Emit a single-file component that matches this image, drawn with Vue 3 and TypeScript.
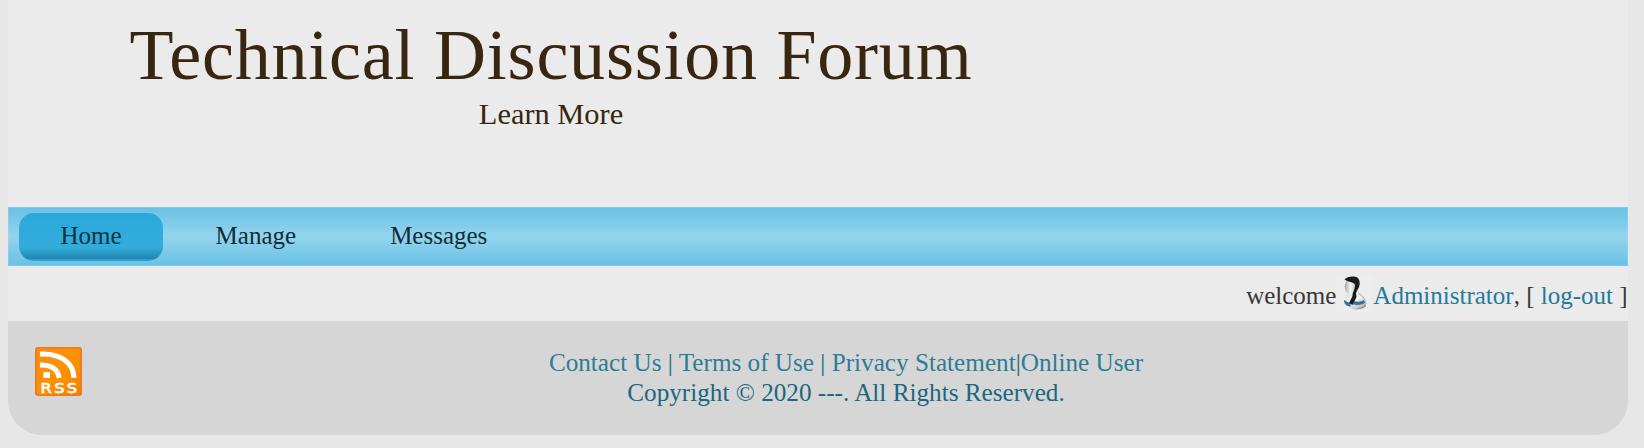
<script setup lang="ts">
interface NavItem {
  label: string
  active: boolean
}

const navItems: NavItem[] = [
  { label: 'Home', active: true },
  { label: 'Manage', active: false },
  { label: 'Messages', active: false },
]
</script>

<template>
  <div class="page">
    <div class="sheet">
      <header class="header">
        <div class="brand">
          <h1 class="title">Technical Discussion Forum</h1>
          <p class="slogan">Learn More</p>
        </div>
      </header>

      <nav class="nav">
        <a
          v-for="item in navItems"
          :key="item.label"
          class="nav-item"
          :class="{ active: item.active }"
        >{{ item.label }}</a>
      </nav>

      <div class="welcome">
        <span>welcome</span>
        <svg class="user-icon" width="36" height="37" viewBox="0 0 36 37">
          <defs>
            <linearGradient id="face" x1="0" x2="1">
              <stop offset="0" stop-color="#a8a8a8" />
              <stop offset=".5" stop-color="#f4f4f4" />
              <stop offset="1" stop-color="#bcbcbc" />
            </linearGradient>
            <linearGradient id="coat" x1="0" x2="1" y2="1">
              <stop offset="0" stop-color="#cfd2d5" />
              <stop offset=".45" stop-color="#fbfbfb" />
              <stop offset="1" stop-color="#a0a4a7" />
            </linearGradient>
          </defs>
          <rect width="36" height="37" fill="#ededed" />
          <path d="M8 27c0-5 2-8 6-9 4-2 8-1 11 2 3 3 5 6 5 9 0 3-6 4-10 3.500-5-.5-12-1-12-5.500z" fill="url(#coat)" />
          <path d="M8 24c2 1 3 2 6 3l1 3.500c-4 0-7-2-7-6.500zM18 25c3 1 7 1 10-1l1 3c-3 2-8 2.500-12 1.500z" fill="#34729f" />
          <path d="M14 32c5 1.500 12 .5 16-3.500.5 4-10 6.500-16 3.500z" fill="#85888a" />
          <path d="M22 17c4 2 7 6 8 11" fill="none" stroke="#b4b7ba" stroke-width="1.200" />
          <ellipse cx="14.500" cy="10.500" rx="5.800" ry="8" fill="url(#face)" />
          <path d="M8.500 3.500C11 .5 18-.5 22 2c2.500 3 2 8 0 11l-2 4 .5 4-4 8-3.500-2 3.500-7c0-4 2.500-6 2.500-11-.5-3-6-2.500-10.500-5.500z" fill="#1b1b1b" />
        </svg>
        <a class="link">Administrator</a><span>, [&nbsp;</span><a class="link">log-out</a><span>&nbsp;]</span>
      </div>

      <footer class="footer">
        <svg class="rss" width="47" height="49" viewBox="0 0 47 49">
          <defs>
            <linearGradient id="feed" y1="0" y2="1" x2="1">
              <stop offset="0" stop-color="#f98b14" />
              <stop offset=".5" stop-color="#ff9200" />
              <stop offset="1" stop-color="#f58200" />
            </linearGradient>
          </defs>
          <rect x=".8" y=".8" width="45.400" height="47.400" rx="2.500" fill="url(#feed)" stroke="#e77a24" stroke-width="1.600" />
          <rect x="8.500" y="25" width="6.500" height="6" rx=".8" fill="#fff" />
          <path d="M5 18c11-.5 18.500 4.500 19 13M5 7c21-1 33.500 9 34 24" fill="none" stroke="#fff" stroke-width="5" />
          <text transform="translate(5.500 45.500) scale(1.200 1)" textLength="30.500" class="rss-text">RSS</text>
        </svg>
        <div class="footer-text">
          <div class="footer-links">
            <a>Contact Us</a><span class="bar"> | </span><a>Terms of Use</a><span class="bar"> | </span><a>Privacy Statement</a><span class="bar">|</span><a>Online User</a>
          </div>
          <div>Copyright © 2020 ---. All Rights Reserved.</div>
        </div>
      </footer>
    </div>
  </div>
</template>

<style>
body {
  background: #e7e7e7;
}
</style>

<style scoped>
.page {
  height: 448px;
  overflow: hidden;
  padding: 0 16px 0 8px;
  box-sizing: border-box;
  background: #e7e7e7;
  font-family: "Liberation Serif", "Times New Roman", serif;
  font-size: 25px;
}

.sheet {
  background: #ebebeb;
  border-radius: 0 0 34px 34px;
}

.header {
  height: 207px;
  box-sizing: border-box;
  padding-top: 15px;
}

.brand {
  width: 1086px;
  text-align: center;
  color: #382611;
}

.title {
  margin: 0;
  font-size: 72px;
  letter-spacing: 0.77px;
  font-weight: 400;
  line-height: 80px;
  height: 81px;
  white-space: nowrap;
}

.slogan {
  margin: 0;
  font-size: 30.4px;
  line-height: 36px;
}

.nav {
  display: flex;
  align-items: center;
  height: 59px;
  padding-left: 11px;
  box-sizing: border-box;
  background: linear-gradient(#68c1e5, #93d4ed 50%, #68c1e5);
  box-shadow: inset 0 0 0 1px rgba(160, 215, 235, 0.4);
}

.nav-item {
  height: 48px;
  line-height: 46px;
  padding: 0 41.5px;
  margin-right: 11px;
  border-radius: 15px;
  color: #102d38;
}

.nav-item.active {
  color: #0b3442;
  background: linear-gradient(#2ba9dc, #33acdb 72%, #1f84ad 96%, #29a5d5 97%);
}

.welcome {
  display: flex;
  align-items: center;
  justify-content: flex-end;
  height: 55px;
  line-height: 30px;
  padding: 4px 0.5px 0 0;
  box-sizing: border-box;
  color: #383838;
}

.user-icon {
  margin: -3px 1px 0 0;
}

.link {
  color: #267997;
}

.footer {
  display: flex;
  height: 114px;
  box-sizing: border-box;
  padding: 26px 0 0 27px;
  background: #d6d6d6;
  border-radius: 0 0 34px 34px;
}

.rss {
  flex: none;
}

.rss-text {
  font: 13.5px "DejaVu Sans", sans-serif;
  fill: #fff;
  stroke: #fff;
  stroke-width: 0.6px;
}

.footer-text {
  flex: 1;
  padding: 0.5px 18px 0 0;
  text-align: center;
  font-size: 25.2px;
  line-height: 30px;
  color: #1b6781;
}

.footer-links {
  color: #2d7c97;
}

.bar {
  color: #1b6781;
}
</style>
